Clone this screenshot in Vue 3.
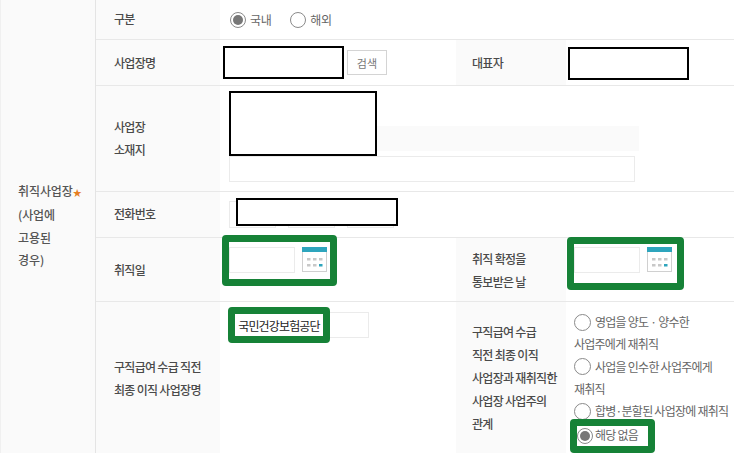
<script setup>
const dots = [0, 1, 2]
const frameRows = [
  { text: '영업을 양도 · 양수한', wrap: '사업주에게 재취직' },
  { text: '사업을 인수한 사업주에게', wrap: '재취직' },
  { text: '합병·분할된 사업장에 재취직', wrap: '' },
]
</script>

<template>
  <div class="page">
    <div class="side">
      <p>취직사업장<span class="star">★</span></p>
      <p>(사업에</p>
      <p>고용된</p>
      <p>경우)</p>
    </div>
    <div class="rows">
      <div class="row r1">
        <div class="th">구분</div>
        <div class="td radios">
          <span class="radio on"></span><span class="opt">국내</span>
          <span class="radio second"></span><span class="opt">해외</span>
        </div>
      </div>

      <div class="row r2">
        <div class="th">사업장명</div>
        <div class="td td-left biz">
          <div class="mask mask-biz"></div>
          <button class="search">검색</button>
        </div>
        <div class="th th2">대표자</div>
        <div class="td td-right"><div class="mask mask-ceo"></div></div>
      </div>

      <div class="row r3">
        <div class="th"><span>사업장<br />소재지</span></div>
        <div class="td addr">
          <div class="mask mask-addr"></div>
          <div class="band"></div>
          <div class="input wide"></div>
        </div>
      </div>

      <div class="row r4">
        <div class="th">전화번호</div>
        <div class="td phone">
          <div class="input ph"></div>
          <div class="input ph"></div>
          <div class="input ph"></div>
          <div class="mask mask-phone"></div>
        </div>
      </div>

      <div class="row r5">
        <div class="th">취직일</div>
        <div class="td td-left">
          <div class="frame frame-date">
            <div class="input date"></div>
            <svg class="cal" viewBox="0 0 25 25" aria-hidden="true">
              <rect x="0.5" y="0.5" width="24" height="24" fill="#fff" stroke="#d0d0d0" />
              <rect x="0" y="0" width="25" height="5" fill="#2ea5bd" />
              <template v-for="d in dots" :key="d">
                <rect :x="5 + d * 6" y="11" width="3.5" height="2.5" fill="#c8c8c8" />
                <rect :x="5 + d * 6" y="17" width="3.5" height="2.5" :fill="d === 2 ? '#2ea5bd' : '#c8c8c8'" />
              </template>
            </svg>
          </div>
        </div>
        <div class="th th2"><span>취직 확정을<br />통보받은 날</span></div>
        <div class="td td-right">
          <div class="frame frame-date2">
            <div class="input date"></div>
            <svg class="cal" viewBox="0 0 25 25" aria-hidden="true">
              <rect x="0.5" y="0.5" width="24" height="24" fill="#fff" stroke="#d0d0d0" />
              <rect x="0" y="0" width="25" height="5" fill="#2ea5bd" />
              <template v-for="d in dots" :key="d">
                <rect :x="5 + d * 6" y="11" width="3.5" height="2.5" fill="#c8c8c8" />
                <rect :x="5 + d * 6" y="17" width="3.5" height="2.5" :fill="d === 2 ? '#2ea5bd' : '#c8c8c8'" />
              </template>
            </svg>
          </div>
        </div>
      </div>

      <div class="row r6">
        <div class="th"><span>구직급여 수급 직전<br />최종 이직 사업장명</span></div>
        <div class="td td-left last-left">
          <div class="input company">
            <div class="frame frame-name">국민건강보험공단</div>
          </div>
        </div>
        <div class="th th2">
          <span>구직급여 수급<br />직전 최종 이직<br />사업장과 재취직한<br />사업장 사업주의<br />관계</span>
        </div>
        <div class="td td-right choices">
          <div v-for="item in frameRows" :key="item.text" class="choice">
            <div class="choice-line"><span class="radio"></span><span class="tx">{{ item.text }}</span></div>
            <div v-if="item.wrap" class="choice-wrap">{{ item.wrap }}</div>
          </div>
          <div class="frame frame-none">
            <span class="radio on"></span><span class="tx">해당 없음</span>
          </div>
        </div>
      </div>
    </div>
  </div>
</template>

<style>
html, body { margin: 0; background: #fff; }
</style>

<style scoped>
.page {
  width: 734px;
  height: 453px;
  display: flex;
  overflow: hidden;
  font-family: "Noto Sans CJK KR", "Noto Sans", sans-serif;
  font-size: 12px;
  color: #555;
  letter-spacing: -0.7px;
}
.side {
  width: 96px;
  flex: none;
  box-sizing: border-box;
  padding-left: 17px;
  background: #fafafa;
  border-left: 1px solid #f0f0f0;
  border-right: 1px solid #e4e4e4;
  display: flex;
  flex-direction: column;
  justify-content: center;
  font-weight: 500;
  line-height: 22.3px;
  letter-spacing: -0.1px;
  padding-bottom: 2px;
}
.side p { margin: 0; }
.star { color: #e67e22; font-size: 9px; }
.rows { flex: 1; display: flex; flex-direction: column; min-width: 0; }
.row { display: flex; box-sizing: border-box; border-bottom: 1px solid #e8e8e8; }
.r1 { height: 40px; }
.r2 { height: 46px; }
.r3 { height: 106px; }
.r4 { height: 46px; }
.r5 { height: 64px; }
.r6 { flex: 1; border-bottom: 0; }
.th {
  flex: none;
  width: 124px;
  box-sizing: border-box;
  padding-left: 18px;
  background: #fafafa;
  display: flex;
  align-items: center;
  font-weight: 500;
  line-height: 23px;
  color: #4a4a4a;
}
.r1 .th { padding-bottom: 3px; }
.r3 .th, .r4 .th { padding-bottom: 2px; }
.th2 { width: 110px; padding-left: 16px; }
.td { flex: 1; position: relative; min-width: 0; }
.td-left { flex: none; width: 236px; }
.radios {
  display: flex;
  align-items: center;
  padding-left: 10px;
  color: #666;
  font-size: 12px;
  letter-spacing: -0.4px;
}
.radio {
  flex: none;
  width: 16px;
  height: 16px;
  box-sizing: border-box;
  border: 1px solid #8a8a8a;
  border-radius: 50%;
  background: #fff;
  position: relative;
  display: inline-block;
}
.radio.on::after {
  content: "";
  position: absolute;
  inset: 2px;
  border-radius: 50%;
  background: #777;
}
.second { margin-left: 19px; }
.opt { margin-left: 4px; }
.biz { display: flex; align-items: center; padding-left: 127px; box-sizing: border-box; }
.search {
  width: 40px;
  height: 25px;
  padding: 0;
  border: 1px solid #d4d4d4;
  background: #fff;
  color: #777;
  font: inherit;
  font-size: 11px;
  letter-spacing: 0.2px;
}
.mask { position: absolute; box-sizing: border-box; border: 2px solid #000; background: #fff; }
.mask-biz { left: 3px; top: 6px; width: 121px; height: 33px; }
.mask-ceo { left: 2px; top: 7px; width: 121px; height: 33px; }
.mask-addr { left: 9px; top: 5px; width: 148px; height: 65px; z-index: 1; }
.mask-phone { left: 16px; top: 6px; width: 162px; height: 28px; }
.addr { display: flex; flex-direction: column; padding: 40px 0 0 9px; }
.band { width: 410px; height: 25px; background: #fafafa; }
.input { box-sizing: border-box; border: 1px solid #ebebeb; background: #fff; }
.wide { width: 406px; height: 26px; margin-top: 5px; }
.phone { display: flex; gap: 12px; padding: 9px 0 0 9px; }
.ph { width: 47px; height: 27px; }
.frame { box-sizing: border-box; border: 7px solid #168237; border-radius: 4px; background: #fff; }
.frame-date {
  display: flex;
  gap: 7px;
  width: 115px;
  height: 51px;
  margin: -3px 0 0 2px;
  padding-top: 5px;
}
.frame-date2 {
  display: flex;
  gap: 7px;
  width: 117px;
  height: 53px;
  margin: -1px 0 0 1px;
  padding-top: 3px;
}
.date { width: 66px; height: 26px; }
.cal { width: 25px; height: 25px; flex: none; }
.last-left { padding: 10px 0 0 9px; box-sizing: border-box; }
.company { position: relative; width: 140px; height: 26px; }
.frame-name {
  position: absolute;
  left: -2px;
  top: -6px;
  width: 102px;
  height: 36px;
  display: flex;
  align-items: center;
  justify-content: center;
  color: #222;
  white-space: nowrap;
  font-size: 12px;
  font-weight: 400;
  letter-spacing: -0.85px;
}
.choices {
  padding: 9px 0 0 8px;
  font-size: 12px;
  line-height: 22.3px;
  color: #666;
  letter-spacing: -0.75px;
  position: relative;
}
.choices > .choice .radio { width: 17px; height: 17px; }
.choice-line { display: flex; align-items: center; height: 22.3px; }
.choice-wrap { height: 22.3px; }
.tx { margin-left: 4px; white-space: nowrap; }
.frame-none {
  position: absolute;
  left: 4px;
  top: 117px;
  width: 85px;
  height: 34px;
  display: flex;
  align-items: center;
  padding-bottom: 1px;
}
.frame-none .tx { margin-left: 2px; }
</style>
